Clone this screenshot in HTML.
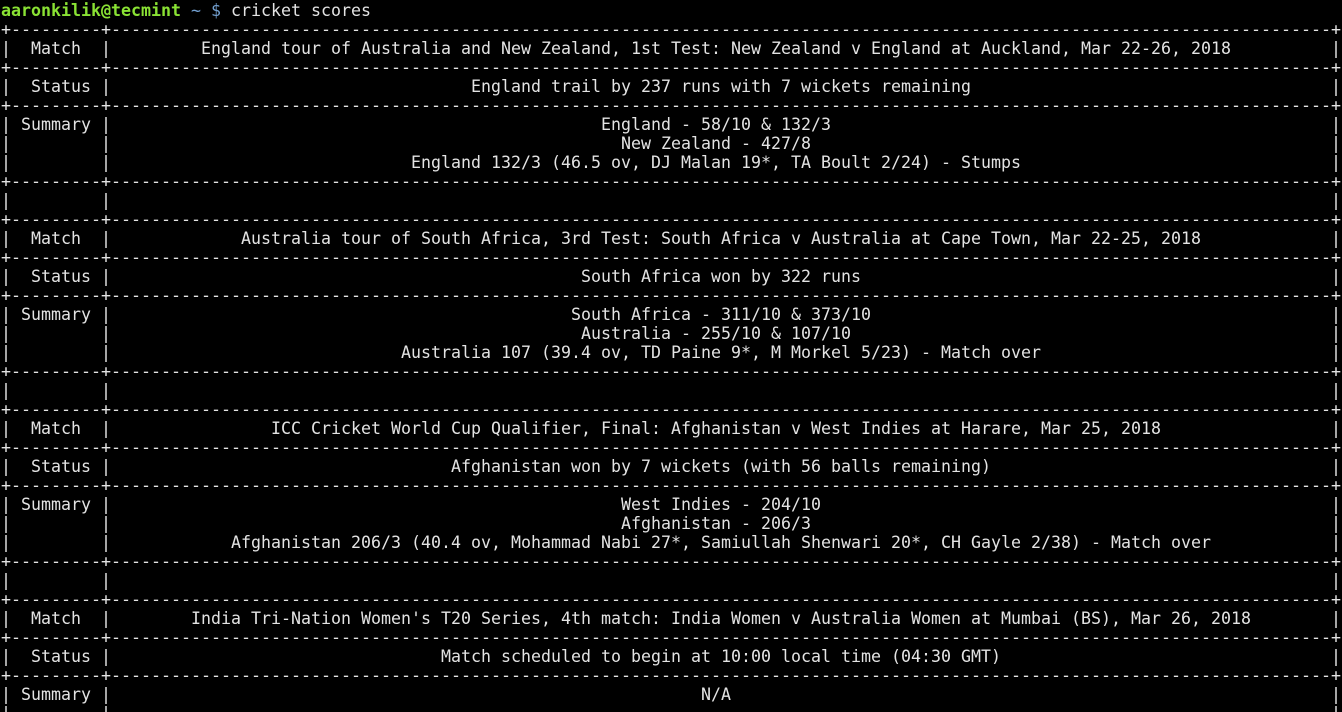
<!DOCTYPE html>
<html><head><meta charset="utf-8"><style>
html,body{margin:0;padding:0;background:#000;width:1342px;height:712px;overflow:hidden}
pre{margin:0;padding:1px 0 0 1px;font-family:"DejaVu Sans Mono","Liberation Mono",monospace;font-size:16.61px;line-height:19px;color:#e3e3e3;white-space:pre}
.c{display:inline-block;width:1220px;text-align:center;vertical-align:top}
.c.o{width:1210px;margin-right:10px}
.g{color:#8ae234;font-weight:bold}.b{color:#729fcf}
</style></head><body><pre><span class="g">aaronkilik@tecmint</span> <span class="b">~ $</span> cricket scores
+---------+--------------------------------------------------------------------------------------------------------------------------+
|  Match  |<span class="c o">England tour of Australia and New Zealand, 1st Test: New Zealand v England at Auckland, Mar 22-26, 2018</span>|
+---------+--------------------------------------------------------------------------------------------------------------------------+
|  Status |<span class="c">England trail by 237 runs with 7 wickets remaining</span>|
+---------+--------------------------------------------------------------------------------------------------------------------------+
| Summary |<span class="c o">England - 58/10 &amp; 132/3</span>|
|         |<span class="c o">New Zealand - 427/8</span>|
|         |<span class="c o">England 132/3 (46.5 ov, DJ Malan 19*, TA Boult 2/24) - Stumps</span>|
+---------+--------------------------------------------------------------------------------------------------------------------------+
|         |<span class="c"> </span>|
+---------+--------------------------------------------------------------------------------------------------------------------------+
|  Match  |<span class="c">Australia tour of South Africa, 3rd Test: South Africa v Australia at Cape Town, Mar 22-25, 2018</span>|
+---------+--------------------------------------------------------------------------------------------------------------------------+
|  Status |<span class="c">South Africa won by 322 runs</span>|
+---------+--------------------------------------------------------------------------------------------------------------------------+
| Summary |<span class="c">South Africa - 311/10 &amp; 373/10</span>|
|         |<span class="c o">Australia - 255/10 &amp; 107/10</span>|
|         |<span class="c">Australia 107 (39.4 ov, TD Paine 9*, M Morkel 5/23) - Match over</span>|
+---------+--------------------------------------------------------------------------------------------------------------------------+
|         |<span class="c"> </span>|
+---------+--------------------------------------------------------------------------------------------------------------------------+
|  Match  |<span class="c o">ICC Cricket World Cup Qualifier, Final: Afghanistan v West Indies at Harare, Mar 25, 2018</span>|
+---------+--------------------------------------------------------------------------------------------------------------------------+
|  Status |<span class="c">Afghanistan won by 7 wickets (with 56 balls remaining)</span>|
+---------+--------------------------------------------------------------------------------------------------------------------------+
| Summary |<span class="c">West Indies - 204/10</span>|
|         |<span class="c o">Afghanistan - 206/3</span>|
|         |<span class="c">Afghanistan 206/3 (40.4 ov, Mohammad Nabi 27*, Samiullah Shenwari 20*, CH Gayle 2/38) - Match over</span>|
+---------+--------------------------------------------------------------------------------------------------------------------------+
|         |<span class="c"> </span>|
+---------+--------------------------------------------------------------------------------------------------------------------------+
|  Match  |<span class="c">India Tri-Nation Women's T20 Series, 4th match: India Women v Australia Women at Mumbai (BS), Mar 26, 2018</span>|
+---------+--------------------------------------------------------------------------------------------------------------------------+
|  Status |<span class="c">Match scheduled to begin at 10:00 local time (04:30 GMT)</span>|
+---------+--------------------------------------------------------------------------------------------------------------------------+
| Summary |<span class="c o">N/A</span>|
|         |<span class="c"> </span>|
</pre></body></html>
